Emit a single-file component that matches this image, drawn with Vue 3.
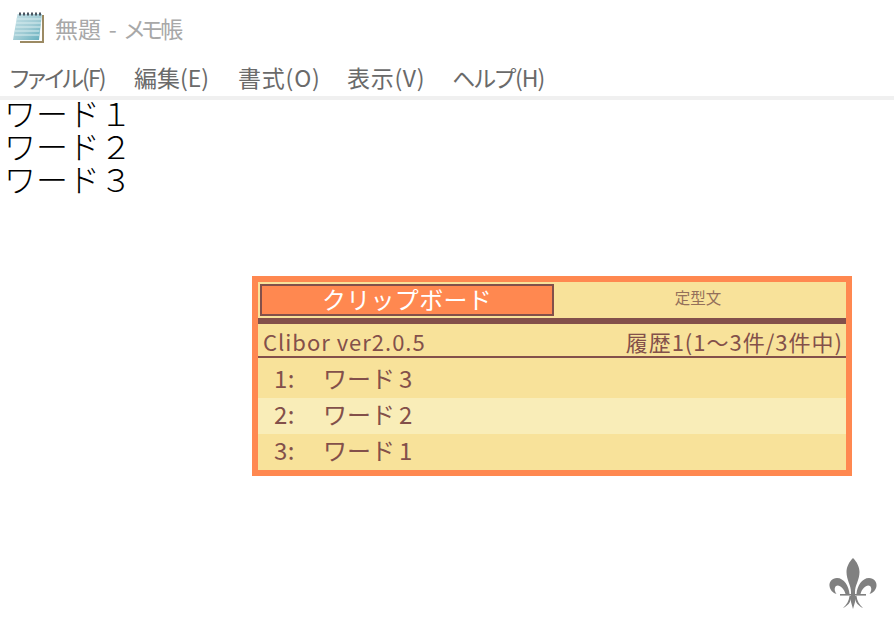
<script setup>
const menus = [
  { t: 'ファイル(F)', w: 95, ls: -1.9 },
  { t: '編集(E)', w: 75, ls: 0 },
  { t: '書式(O)', w: 80, ls: 0.8 },
  { t: '表示(V)', w: 76, ls: 0.7 },
  { t: 'ヘルプ(H)', w: 90, ls: -1 }
]
const lines = ['ワード１', 'ワード２', 'ワード３']
const rows = [
  { n: '1:', t: 'ワード', d: '3' },
  { n: '2:', t: 'ワード', d: '2' },
  { n: '3:', t: 'ワード', d: '1' }
]
</script>

<template>
  <div class="page">
    <div class="title">
      <svg class="nicon" viewBox="0 0 34 34" width="34" height="34">
        <defs>
          <linearGradient id="nb" x1="0" y1="0" x2="1" y2="1">
            <stop offset="0" stop-color="#c4e0e6" />
            <stop offset="0.55" stop-color="#9fcbd4" />
            <stop offset="1" stop-color="#62aebd" />
          </linearGradient>
        </defs>
        <path d="M8 32h24V4h-2v26H8z" fill="#9c8a63" />
        <path d="M8 30h22V6l-2 23H8z" fill="#fff" />
        <path d="M5.500 3h24.500l-3 26H1z" fill="url(#nb)" />
        <path d="M4.500 8h25M4 12h25M3.500 16h25M3 20h24.500M2.500 24h24.500" stroke="#d8edf0" stroke-width="1.400" opacity=".7" />
        <path d="M8 1.500v3M12 1.500v3M16 1.500v3M20 1.500v3M24 1.500v3M28 1.500v3" stroke="#4a5560" stroke-width="2" />
      </svg>
      <span class="ttext">無題 - <span class="kana">メモ帳</span></span>
    </div>
    <div class="menu">
      <span v-for="m in menus" :key="m.t" class="mitem" :style="{ width: m.w + 'px', letterSpacing: m.ls + 'px' }">{{ m.t }}</span>
    </div>
    <div class="editor">
      <div v-for="l in lines" :key="l">{{ l }}</div>
    </div>

    <div class="clip">
      <div class="tabs">
        <div class="tab active">クリップボード</div>
        <div class="tab">定型文</div>
      </div>
      <div class="info">
        <span>Clibor ver2.0.5</span>
        <span>履歴1(1～3件/3件中)</span>
      </div>
      <div class="list">
        <div v-for="r in rows" :key="r.n" class="row">
          <span class="num">{{ r.n }}</span>
          <span>{{ r.t }}</span>
          <span class="digit">{{ r.d }}</span>
        </div>
      </div>
    </div>

    <svg class="fleur" viewBox="0 0 48 52" width="48" height="52" fill="#808080">
      <path d="M24 0C20 4 17.500 9 17.500 14 17.500 22 22 27 22 34V44L24 51 26 44V34C26 27 30.500 22 30.500 14 30.500 9 28 4 24 0Z" />
      <rect x="11" y="36" width="26" height="1.600" />
      <path d="M20.500 36C20 28 15 20 8 20 3 20 0 24 .5 28 1 32 4 35 7.500 36 5.500 33 5 30 7 28 10 26 15 30 16.500 36Z" />
      <path d="M20.500 38C20 43 17.500 47 14 50 17 48.500 21 46 22 41V38Z" />
      <g transform="matrix(-1 0 0 1 48 0)">
        <path d="M20.500 36C20 28 15 20 8 20 3 20 0 24 .5 28 1 32 4 35 7.500 36 5.500 33 5 30 7 28 10 26 15 30 16.500 36Z" />
        <path d="M20.500 38C20 43 17.500 47 14 50 17 48.500 21 46 22 41V38Z" />
      </g>
    </svg>
  </div>
</template>

<style scoped>
.page {
  position: relative;
  width: 894px;
  height: 624px;
  overflow: hidden;
  background: #fff;
  font-family: "Noto Sans CJK JP", "Liberation Sans", sans-serif;
}
.title {
  display: flex;
  align-items: center;
  height: 60px;
  padding-left: 12px;
  box-sizing: border-box;
}
.nicon {
  flex: none;
  margin-top: -4px;
}
.ttext {
  margin-left: 9px;
  font-size: 23px;
  color: #a8a8a8;
  line-height: 56px;
  margin-bottom: 4px;
  font-feature-settings: "palt";
  word-spacing: 2.500px;
}
.kana {
  letter-spacing: -3px;
}
.menu {
  display: flex;
  gap: 29px;
  height: 36px;
  padding-left: 10px;
  font-size: 23px;
  line-height: 34px;
  color: #6a6a6a;
  border-bottom: 4px solid #f0f0f0;
  font-feature-settings: "palt";
}
.mitem {
  flex: none;
  white-space: nowrap;
}
.editor {
  margin-top: -4px;
  font-size: 32px;
  line-height: 33px;
  color: #000;
  padding-left: 4px;
  font-weight: 300;
}
.clip {
  position: absolute;
  left: 252px;
  top: 276px;
  width: 600px;
  height: 200px;
  box-sizing: border-box;
  border: 6px solid #ff8850;
  background: #f8e29a;
  color: #83504a;
}
.tabs {
  display: flex;
  height: 42px;
  padding: 2px 0 2px 2px;
  box-sizing: border-box;
  border-bottom: 6px solid #83504a;
}
.tab {
  flex: 1;
  text-align: center;
  font-size: 15.500px;
  line-height: 26px;
  padding-right: 4px;
  color: #94705a;
}
.tab.active {
  flex: none;
  width: 294px;
  padding-right: 0;
  box-sizing: border-box;
  border: 2px solid #83504a;
  background: #ff8850;
  color: #fff;
  font-size: 24px;
  line-height: 25px;
  letter-spacing: 0.300px;
}
.info {
  display: flex;
  justify-content: space-between;
  height: 32px;
  padding: 0 3px 0 5px;
  font-size: 22px;
  line-height: 34px;
  letter-spacing: 1px;
  border-bottom: 2px solid #83504a;
}
.list {
  padding-top: 4px;
}
.row {
  display: flex;
  height: 36px;
  padding-left: 16px;
  font-size: 24px;
  line-height: 32px;
}
.row:nth-child(2) {
  background: #f9edb8;
}
.num {
  width: 49px;
  letter-spacing: 0.500px;
}
.digit {
  margin-left: 4px;
}
.fleur {
  position: absolute;
  left: 829px;
  top: 558px;
}
</style>
